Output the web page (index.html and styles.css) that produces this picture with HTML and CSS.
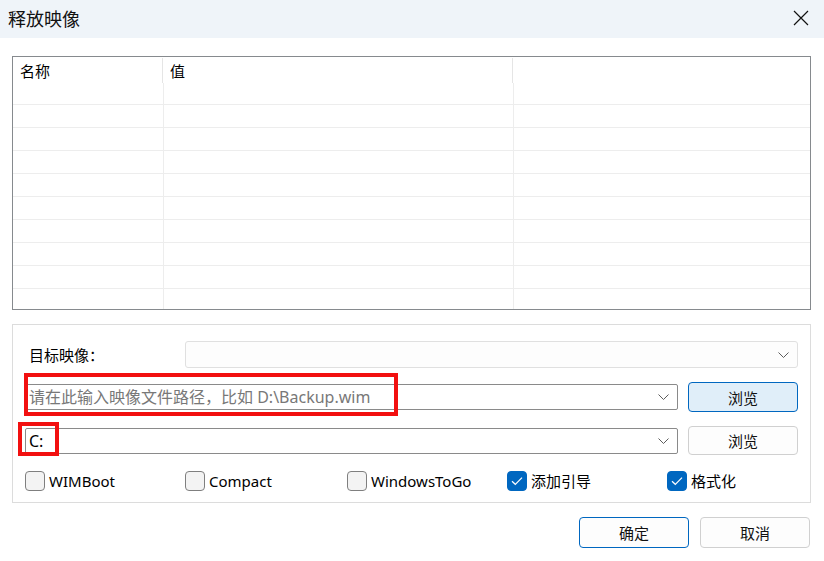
FILE: index.html
```html
<!DOCTYPE html>
<html lang="zh">
<head>
<meta charset="utf-8">
<title>释放映像</title>
<link rel="stylesheet" href="styles.css">
</head>
<body>
<div class="titlebar">
  <span class="title">释放映像</span>
  <svg class="close" width="16" height="16" viewBox="0 0 16 16"><path d="M1 1 L15 15 M15 1 L1 15" stroke="#111" stroke-width="1.2" fill="none"/></svg>
</div>

<div class="list">
  <div class="list-head">
    <div class="hcell c1">名称</div>
    <div class="hcell c2">值</div>
    <div class="hcell c3"></div>
  </div>
  <div class="list-body">
    <div class="row"><div class="cell c1"></div><div class="cell c2"></div><div class="cell c3"></div></div>
    <div class="row"><div class="cell c1"></div><div class="cell c2"></div><div class="cell c3"></div></div>
    <div class="row"><div class="cell c1"></div><div class="cell c2"></div><div class="cell c3"></div></div>
    <div class="row"><div class="cell c1"></div><div class="cell c2"></div><div class="cell c3"></div></div>
    <div class="row"><div class="cell c1"></div><div class="cell c2"></div><div class="cell c3"></div></div>
    <div class="row"><div class="cell c1"></div><div class="cell c2"></div><div class="cell c3"></div></div>
    <div class="row"><div class="cell c1"></div><div class="cell c2"></div><div class="cell c3"></div></div>
    <div class="row"><div class="cell c1"></div><div class="cell c2"></div><div class="cell c3"></div></div>
    <div class="row"><div class="cell c1"></div><div class="cell c2"></div><div class="cell c3"></div></div>
    <div class="row last"><div class="cell c1"></div><div class="cell c2"></div><div class="cell c3"></div></div>
  </div>
</div>

<div class="group">
  <div class="frow r1">
    <span class="label">目标映像：</span>
    <div class="combo light">
      <span class="ctext"></span>
      <svg class="chev" width="11" height="6" viewBox="0 0 11 6"><path d="M0.5 0.5 L5.5 5.5 L10.5 0.5" stroke="#5c5c5c" stroke-width="1" fill="none"/></svg>
    </div>
  </div>
  <div class="frow r2">
    <div class="combo dark">
      <span class="ctext placeholder">请在此输入映像文件路径，比如 D:\Backup.wim</span>
      <svg class="chev" width="11" height="6" viewBox="0 0 11 6"><path d="M0.5 0.5 L5.5 5.5 L10.5 0.5" stroke="#5c5c5c" stroke-width="1" fill="none"/></svg>
      <span class="mark mark1"></span>
    </div>
    <button class="btn accent">浏览</button>
  </div>
  <div class="frow r3">
    <div class="combo dark">
      <span class="ctext value">C:</span>
      <svg class="chev" width="11" height="6" viewBox="0 0 11 6"><path d="M0.5 0.5 L5.5 5.5 L10.5 0.5" stroke="#5c5c5c" stroke-width="1" fill="none"/></svg>
      <span class="mark mark2"></span>
    </div>
    <button class="btn">浏览</button>
  </div>
  <div class="checks">
    <label class="chk w1"><span class="box"></span><span class="ltext">WIMBoot</span></label>
    <label class="chk w2"><span class="box"></span><span class="ltext">Compact</span></label>
    <label class="chk w3"><span class="box"></span><span class="ltext">WindowsToGo</span></label>
    <label class="chk w4"><span class="box on"><svg width="12" height="10" viewBox="0 0 12 10"><path d="M1 5.2 L4.3 8.3 L11 1.6" stroke="#fff" stroke-width="1.2" fill="none"/></svg></span><span class="ltext">添加引导</span></label>
    <label class="chk w5"><span class="box on"><svg width="12" height="10" viewBox="0 0 12 10"><path d="M1 5.2 L4.3 8.3 L11 1.6" stroke="#fff" stroke-width="1.2" fill="none"/></svg></span><span class="ltext">格式化</span></label>
  </div>
</div>

<div class="footer">
  <button class="btn fbtn primary">确定</button>
  <button class="btn fbtn">取消</button>
</div>
</body>
</html>
```

FILE: styles.css
```css
* { box-sizing: border-box; }
html, body { margin: 0; padding: 0; }
body {
  width: 824px;
  height: 561px;
  background: #ffffff;
  font-family: "Noto Sans", "Noto Sans CJK SC", sans-serif;
  font-size: 15px;
  color: #000;
  overflow: hidden;
}

.titlebar {
  height: 38px;
  background: #eff4f9;
  display: flex;
  align-items: center;
  justify-content: space-between;
  padding: 0 15px 0 8px;
}
.title {
  font-family: "Noto Sans CJK SC", sans-serif;
  font-size: 18px;
  color: #111;
  line-height: 1;
  margin-top: -2px;
}
.close { display: block; margin-top: -2px; }

.list {
  margin: 18px 0 0 12px;
  width: 799px;
  height: 254px;
  border: 1px solid #868a8e;
  background: #fff;
  overflow: hidden;
}
.list-head {
  display: flex;
  height: 26px;
}
.hcell {
  font-family: "Noto Sans CJK SC", sans-serif;
  font-size: 15px;
  padding: 2px 0 0 7px;
  line-height: 22px;
}
.hcell.c1 { width: 150px; border-right: 1px solid #e5e5e5; }
.hcell.c2 { width: 350px; border-right: 1px solid #e5e5e5; }
.hcell.c3 { flex: 1; }
.list-head .hcell { margin-top: 1px; }

.row {
  display: flex;
  height: 23px;
  border-bottom: 1px solid #ededed;
}
.row:first-child { height: 22px; }
.row.last { border-bottom: none; }
.cell.c1 { width: 151px; border-right: 1px solid #ededed; }
.cell.c2 { width: 350px; border-right: 1px solid #ededed; }
.cell.c3 { flex: 1; }

.group {
  margin: 14px 0 0 12px;
  width: 799px;
  height: 179px;
  border: 1px solid #dcdcdc;
  padding: 16px 12px 0 12px;
  display: flex;
  flex-direction: column;
}
.frow {
  display: flex;
  align-items: center;
}
.r1 { height: 27px; }
.r2 { height: 30px; margin-top: 14px; }
.r3 { height: 29px; margin-top: 14px; }

.label {
  font-family: "Noto Sans CJK SC", sans-serif;
  font-size: 15px;
  width: 160px;
  padding-left: 4px;
}
.combo {
  position: relative;
  display: flex;
  align-items: center;
  justify-content: space-between;
  border-radius: 3px;
  padding: 0 8px 0 3px;
}
.combo.light {
  flex: 1;
  height: 27px;
  border: 1px solid #e0e0e0;
  background: #fdfdfd;
}
.combo.dark {
  width: 653px;
  height: 26px;
  border: 1px solid #8a8a8a;
  border-radius: 2px;
  background: #fff;
}
.r3 .combo.dark { margin-top: 1px; }
.ctext {
  font-family: "Noto Sans", "Noto Sans CJK SC", sans-serif;
  font-size: 16px;
  line-height: 24px;
  white-space: nowrap;
}
.placeholder { color: #787878; font-family: "Noto Sans", "Noto Sans CJK SC", sans-serif; font-size: 16px; }
.value { font-size: 16px; }
.chev { display: block; }

.mark {
  position: absolute;
  border: 4px solid #f21010;
  pointer-events: none;
}
.mark1 { left: -2px; top: -12px; width: 374px; height: 43px; }
.mark2 { left: -8px; top: -7px; width: 41px; height: 34px; }

.btn {
  font-family: "Noto Sans CJK SC", sans-serif;
  font-size: 15px;
  color: #111;
  width: 110px;
  height: 29px;
  margin-left: 10px;
  border: 1px solid #d0d0d0;
  border-radius: 4px;
  background: #fdfdfd;
  padding: 0;
  line-height: 1;
}
.btn.accent {
  height: 30px;
  background: #e0eef9;
  border-color: #0067c0;
}

.checks {
  display: flex;
  align-items: center;
  height: 20px;
  margin-top: 16px;
}
.chk {
  display: flex;
  align-items: center;
  gap: 4px;
}
.w1 { width: 160px; }
.w2 { width: 162px; }
.w3 { width: 160px; }
.w4 { width: 160px; }
.box {
  width: 20px;
  height: 20px;
  border: 1px solid #7f7f7f;
  border-radius: 4px;
  background: #f3f3f3;
  display: flex;
  align-items: center;
  justify-content: center;
}
.box.on {
  background: #0067c0;
  border-color: #0067c0;
}
.ltext {
  font-family: "Noto Sans", "Noto Sans CJK SC", sans-serif;
  font-size: 15px;
  line-height: 20px;
}
.w4 .ltext, .w5 .ltext { font-family: "Noto Sans CJK SC", sans-serif; }

.footer {
  display: flex;
  justify-content: flex-end;
  padding-right: 14px;
  margin-top: 14px;
}
.fbtn { height: 31px; margin-left: 11px; }
.fbtn.primary { border-color: #0067c0; }
```
